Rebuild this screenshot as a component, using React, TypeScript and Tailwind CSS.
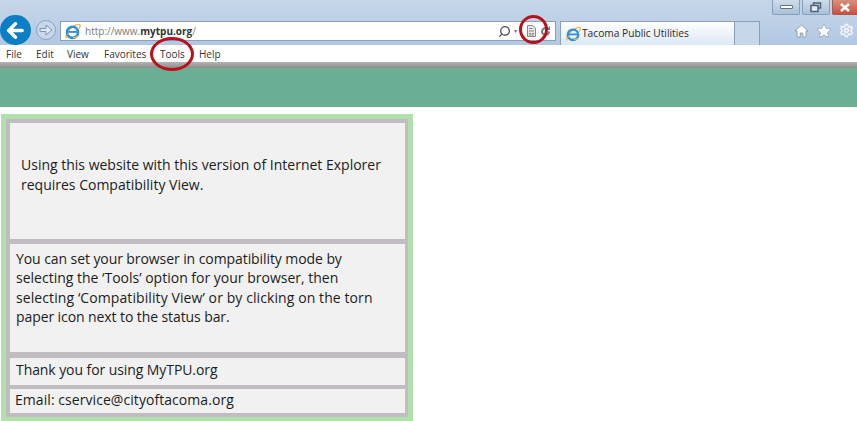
import { ArrowLeft, Search, Settings } from "lucide-react";

const menuItems = [
  { label: "File", className: "w-[36px] pl-[6px]" },
  { label: "Edit", className: "w-[31px]" },
  { label: "View", className: "w-[37px]" },
  { label: "Favorites", className: "w-[56px]" },
  { label: "Tools", className: "w-[39px]" },
  { label: "Help", className: "w-[40px]" },
];

//the little blue e logo
function IeLogo({ size }: { size: number }) {
  return (
    <svg width={size} height={size} viewBox="0 0 20 20" className="shrink-0">
      <path d="M3 18c-2-2 1-8 5-11.500C12 3 17 0.800 18.500 2c1 1 .3 3-.8 5" fill="none" stroke="#f2b632" strokeWidth="1.600" />
      <circle cx="10" cy="11" r="6.500" fill="none" stroke="#2f8fd8" strokeWidth="3" />
      <path d="M5 10.500h11" stroke="#2f8fd8" strokeWidth="2.200" />
      <path d="M4 13h2" stroke="#f2b632" strokeWidth="1.500" />
      <path d="M11 17.500l6-2" stroke="#f2b632" strokeWidth="1.500" />
    </svg>
  );
}

function Cell({ className, children }: { className: string; children: React.ReactNode }) {
  return <div className={"whitespace-nowrap bg-[#f1f1f1] text-[14px] leading-[19.3px] text-[#1c1c1c] " + className}>{children}</div>;
}

export default function App() {
  return (
    <div className="h-[421px] w-[857px] overflow-hidden bg-white font-['Open_Sans','Noto_Sans',sans-serif]">
      {/* browser chrome */}
      <div className="relative h-[45px] bg-gradient-to-b from-[#c6d6e8] via-[#bdd0e6] to-[#b1c8e2]">
        <div className="flex h-[15px] justify-end">
          <div className="flex w-[28px] items-center justify-center rounded-b-[2px] border border-t-0 border-[#84a0bd] bg-gradient-to-b from-[#cfdcea] to-[#a9c1da]">
            <div className="h-[4px] w-[13px] rounded-[1px] border border-[#5f7288] bg-white" />
          </div>
          <div className="ml-[2px] flex w-[28px] items-center justify-center rounded-b-[2px] border border-t-0 border-[#84a0bd] bg-gradient-to-b from-[#cfdcea] to-[#a9c1da]">
            <svg width="12" height="11" viewBox="0 0 12 11" className="text-[#4f6075]">
              <path d="M3.500 3V1h7v5H8" fill="none" stroke="currentColor" strokeWidth="1.500" />
              <rect x="1" y="3.500" width="7" height="6" fill="#e4ebf3" stroke="currentColor" strokeWidth="1.500" />
            </svg>
          </div>
          <div className="ml-[2px] flex w-[25px] items-center justify-center rounded-bl-[2px] border-b border-l border-[#a8584c] bg-gradient-to-b from-[#d9907f] to-[#c8503c]">
            <svg width="12" height="9" viewBox="0 0 12 9">
              <path d="M2 1l8 7M10 1l-8 7" stroke="#ffffff" strokeWidth="2.600" />
            </svg>
          </div>
        </div>
        <div className="flex h-[30px] items-start">
          <div className="flex h-[30px] w-[31px] shrink-0 items-center justify-center rounded-full bg-[#0c7fc4]">
            <ArrowLeft size={23} strokeWidth={3.500} className="text-white" />
          </div>
          <div className="ml-[5px] mt-[5px] flex h-[20px] w-[20px] shrink-0 items-center justify-center rounded-full border border-[#8aa3bf] bg-[#c8d8ea]">
            <svg width="14" height="14" viewBox="0 0 14 14">
              <path d="M1 5.500h6V2l6 5-6 5V8.500H1z" fill="#dfe8f2" stroke="#8097b2" strokeWidth="1" />
            </svg>
          </div>
          <div className="ml-[4px] mt-[6px] flex h-[20px] w-[496px] shrink-0 items-center border border-[#8ba0b8] bg-white pl-[3px]">
            <IeLogo size={17} />
            <span className="ml-[4px] text-[10px] text-[#7b7b7b]">
              http://www.<span className="font-bold text-[#333]">mytpu.org</span>/
            </span>
            <div className="ml-auto flex items-center pr-[4px]">
              <Search size={13} strokeWidth={2.500} className="-scale-x-100 text-[#555]" />
              <span className="ml-[3px] mr-[10px] text-[6px] text-[#777]">▾</span>
              <svg width="9" height="12" viewBox="0 0 9 12" className="mr-[4px]">
                <path d="M.5.500h5l3 2.500v8.500h-8z" fill="#e6e6e6" stroke="#8a8a8a" />
                <path d="M2 3.500h3.500M2 6h5M2 8.500h2M5 8.500h2M2 10h5" stroke="#8a8a8a" />
              </svg>
              <svg width="11" height="11" viewBox="0 0 11 11">
                <path d="M9 5.500a3.500 3.500 0 1 1-1-2.500" fill="none" stroke="#777" strokeWidth="2" />
                <path d="M10 0v4H6z" fill="#777" />
              </svg>
            </div>
          </div>
          <div className="ml-[4px] mt-[6px] flex h-[24px] w-[175px] shrink-0 items-center border border-b-0 border-[#8ba0b8] bg-gradient-to-b from-white to-[#dbe8f6] pl-[4px]">
            <IeLogo size={16} />
            <span className="ml-[1px] text-[10.200px] text-[#2a2a2a]">Tacoma Public Utilities</span>
          </div>
          <div className="mt-[6px] h-[24px] w-[25px] shrink-0 border border-b-0 border-l-0 border-[#8ba0b8] bg-[#c6d7ea]" />
          <div className="ml-auto mt-[8px] flex items-center pr-[3px]">
            <svg width="15" height="14" viewBox="0 0 15 14">
              <path d="M7.500 1L1 7h2v6h3.200V9h2.600v4H12V7h2z" fill="#ffffff" stroke="#7f93aa" strokeWidth="0.800" />
            </svg>
            <svg width="16" height="15" viewBox="0 0 16 15" className="ml-[7px]">
              <path d="M8 .8l2.200 4.500 5 .7-3.600 3.500.9 5L8 12.100l-4.500 2.400.9-5L.8 6l5-.7z" fill="#ffffff" stroke="#7f93aa" strokeWidth="0.600" />
            </svg>
            <Settings size={15} strokeWidth={2.500} className="ml-[7px] text-[#f2f5f9]" />
          </div>
        </div>
        {/* red marker round the torn paper icon */}
        <div className="absolute left-[519px] top-[15px] h-[29px] w-[29px] rounded-full border-[3px] border-[#b8101c]" />
      </div>

      {/* menu bar */}
      <div className="relative flex h-[17px] items-center bg-white pt-[2px] text-[10px] text-[#333]">
        {menuItems.map((item) => (
          <span key={item.label} className={item.className}>
            {item.label}
          </span>
        ))}
        <div className="absolute left-[150px] top-[-8px] h-[34px] w-[44px] rounded-[50%] border-[3px] border-[#b8101c]" />
      </div>
      <div className="h-[6px] bg-gradient-to-b from-[#b5b5b5] to-[#8c8c8c]" />
      <div className="h-[39px] bg-[#6daf94]" />

      {/* message box */}
      <div className="ml-[1px] mt-[7px] h-[312px] w-[412px] bg-[#b2e0ac] px-[5px] pt-[5px]">
        <div className="flex h-[298px] w-[402px] flex-col bg-[#c0bcc2] pl-[4px] pr-[3px] pt-[4px]">
          <Cell className="flex h-[116px] flex-col justify-center pb-[13px] pl-[11px]">
            <p>Using this website with this version of Internet Explorer</p>
            <p>requires Compatibility View.</p>
          </Cell>
          <Cell className="mt-[5px] h-[108px] pl-[6px] pt-[5px]">
            <p className="tracking-[-0.08px]">You can set your browser in compatibility mode by</p>
            <p>selecting the ‘Tools’ option for your browser, then</p>
            <p className="tracking-[0.09px]">selecting ‘Compatibility View’ or by clicking on the torn</p>
            <p className="tracking-[-0.09px]">paper icon next to the status bar.</p>
          </Cell>
          <Cell className="mt-[6px] flex h-[27px] items-center pb-[3px] pl-[6px] tracking-[-0.08px]">Thank you for using MyTPU.org</Cell>
          <Cell className="mt-[4px] flex h-[24px] items-center pb-[2px] pl-[5px] tracking-[0.06px]">Email: cservice@cityoftacoma.org</Cell>
        </div>
      </div>
    </div>
  );
}
